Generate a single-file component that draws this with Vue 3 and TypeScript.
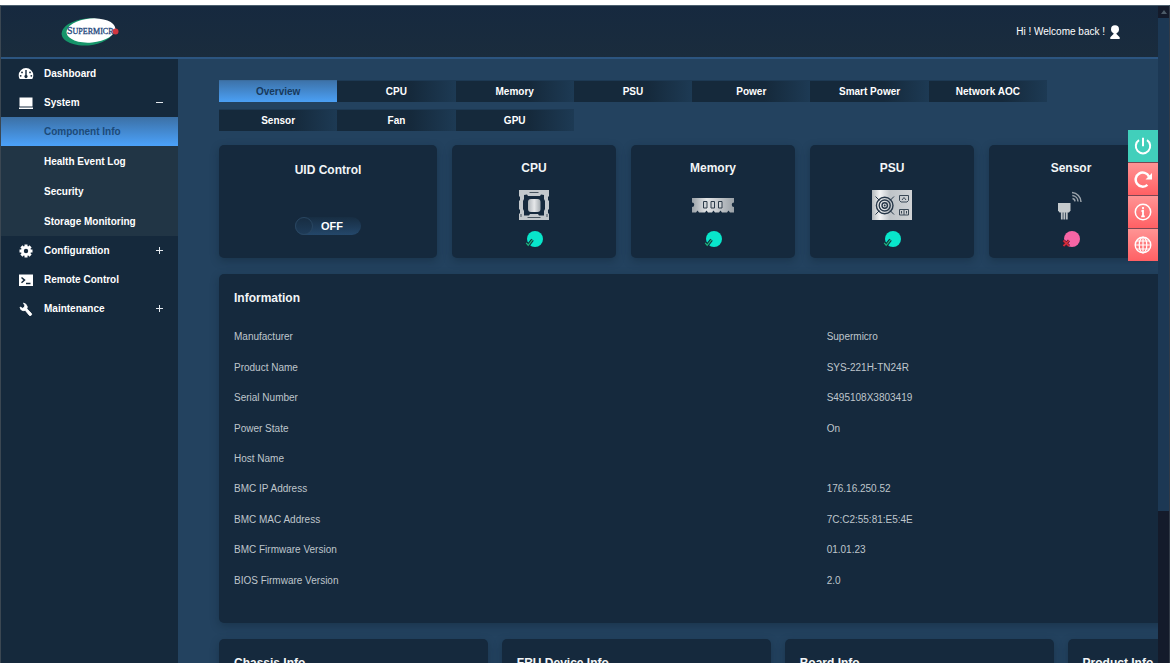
<script setup lang="ts">
import { ref } from 'vue'

interface MenuItem {
  label: string
  icon: string
  mark?: string
  children?: string[]
}

const menu: MenuItem[] = [
  { label: 'Dashboard', icon: 'gauge' },
  {
    label: 'System',
    icon: 'laptop',
    mark: 'minus',
    children: ['Component Info', 'Health Event Log', 'Security', 'Storage Monitoring'],
  },
  { label: 'Configuration', icon: 'gear', mark: 'plus' },
  { label: 'Remote Control', icon: 'terminal' },
  { label: 'Maintenance', icon: 'wrench', mark: 'plus' },
]

const tabs: string[] = [
  'Overview', 'CPU', 'Memory', 'PSU', 'Power', 'Smart Power', 'Network AOC', 'Sensor', 'Fan', 'GPU',
]

const components: { label: string; ok: boolean }[] = [
  { label: 'CPU', ok: true },
  { label: 'Memory', ok: true },
  { label: 'PSU', ok: true },
  { label: 'Sensor', ok: false },
]

const info: [string, string][] = [
  ['Manufacturer', 'Supermicro'],
  ['Product Name', 'SYS-221H-TN24R'],
  ['Serial Number', 'S495108X3803419'],
  ['Power State', 'On'],
  ['Host Name', ''],
  ['BMC IP Address', '176.16.250.52'],
  ['BMC MAC Address', '7C:C2:55:81:E5:4E'],
  ['BMC Firmware Version', '01.01.23'],
  ['BIOS Firmware Version', '2.0'],
]

const details: string[] = ['Chassis Info', 'FRU Device Info', 'Board Info', 'Product Info']
const actions: string[] = ['Power', 'Refresh', 'Information', 'Language']

const activeTab = ref('Overview')
const activePage = ref('Component Info')
const uid = ref(false)
</script>

<template>
  <div class="app">
    <div class="screen">
      <header class="header">
        <a href="#" class="brand">
          <svg width="58" height="30" viewBox="0 0 58 30">
            <ellipse cx="26.500" cy="15" rx="26" ry="13.500" fill="#16956a" transform="rotate(-5 26 15)" />
            <ellipse cx="30" cy="13.500" rx="24.500" ry="12" fill="#fff" transform="rotate(-5 30 14)" />
            <text x="6" y="17" class="logo-text"><tspan class="logo-cap">S</tspan>UPERMICR</text>
            <circle cx="54.500" cy="14.500" r="3" fill="#d2363f" />
          </svg>
        </a>
        <a href="#" class="user">
          <span>Hi ! Welcome back !</span>
          <svg width="10" height="14" viewBox="0 0 10 14" fill="#fff">
            <circle cx="5" cy="4.300" r="4" />
            <path d="M3.500 7.500h3v1.500l3.200 3.200V14H.3v-1.800L3.500 9z" />
          </svg>
        </a>
      </header>

      <div class="body">
        <nav class="sidebar">
          <template v-for="item in menu" :key="item.label">
            <a href="#" class="item">
              <svg v-if="item.icon === 'gauge'" width="16" height="14" viewBox="0 0 16 14">
                <path d="M8 1a7.300 7.300 0 0 1 7.300 7.300c0 1.500-.4 2.900-1.100 3.700H1.800C1.100 11.200.7 9.800.7 8.300A7.300 7.300 0 0 1 8 1z" fill="#fff" />
                <g fill="#15293b">
                  <circle cx="4" cy="5.400" r=".9" /><circle cx="12" cy="5.400" r=".9" />
                  <circle cx="2.700" cy="8.800" r=".9" /><circle cx="13.300" cy="8.800" r=".9" />
                  <path d="M7.300 3h1.400v5a1.600 1.600 0 1 1-1.400 0z" />
                </g>
              </svg>
              <svg v-else-if="item.icon === 'laptop'" width="16" height="14" viewBox="0 0 16 14" fill="#fff">
                <path d="M1.500 1.500h13v9h-13zM1 11.500h14V13H1z" />
              </svg>
              <svg v-else-if="item.icon === 'gear'" width="16" height="14" viewBox="0 0 16 14">
                <g stroke="#fff" stroke-width="3">
                  <path d="M8 .5v13M1.500 7h13M3.400 2.400l9.200 9.200M12.600 2.400l-9.200 9.200" />
                </g>
                <circle cx="8" cy="7" r="5" fill="#fff" />
                <circle cx="8" cy="7" r="2.200" fill="#15293b" />
              </svg>
              <svg v-else-if="item.icon === 'terminal'" width="16" height="14" viewBox="0 0 16 14">
                <path d="M1 1.500h14v11.500H1z" fill="#fff" />
                <path d="M3.500 4.500l3 2.600-3 2.600M8 10.500h4.500" fill="none" stroke="#15293b" stroke-width="1.500" />
              </svg>
              <svg v-else width="16" height="14" viewBox="0 0 16 14">
                <path d="M5.500 1l2.400 1.200 1.400 2.600-.4 2 4.300 4.400a1.300 1.300 0 0 1-2 2L7.300 8.400 5 8.700 2.800 7.500 2 5l2.600 1.300 1.900-1.200.2-1.800z" fill="#fff" stroke="#fff" stroke-width=".8" />
              </svg>
              <span class="item-label">{{ item.label }}</span>
              <svg v-if="item.mark" width="7" height="7" viewBox="0 0 7 7" fill="#e4e9ee">
                <path d="M0 3h7v1H0z" />
                <path v-if="item.mark === 'plus'" d="M3 0h1v7H3z" />
              </svg>
            </a>
            <div v-if="item.children" class="submenu">
              <a
                v-for="child in item.children"
                :key="child"
                href="#"
                class="subitem"
                :class="{ active: child === activePage }"
                @click.prevent="activePage = child"
              >{{ child }}</a>
            </div>
          </template>
        </nav>

        <main class="content">
          <div class="tabs">
            <button
              v-for="tab in tabs"
              :key="tab"
              type="button"
              class="tab"
              :class="{ active: tab === activeTab }"
              @click="activeTab = tab"
            >{{ tab }}</button>
          </div>

          <div class="cards">
            <section class="panel uid">
              <h2>UID Control</h2>
              <label class="switch" :class="{ on: uid }">
                <input v-model="uid" type="checkbox" role="switch" aria-label="UID Control" />
                <span class="knob"></span>
                <span class="state">{{ uid ? 'ON' : 'OFF' }}</span>
              </label>
            </section>
            <section v-for="part in components" :key="part.label" class="panel card">
              <h2>{{ part.label }}</h2>
              <svg v-if="part.label === 'CPU'" width="30" height="30" viewBox="0 0 30 30">
                <defs>
                  <linearGradient id="metal-cpu"><stop offset="0" stop-color="#aeb4b9" /><stop offset=".5" stop-color="#e6e8ea" /><stop offset="1" stop-color="#a4abb0" /></linearGradient>
                </defs>
                <path fill="#c3c8cc" fill-rule="evenodd" d="M0 0h30v6l-1 1v3l1 1v8l-1 1v3l1 1v6H0v-6l1-1v-3l-1-1v-8l1-1V7L0 6zM8 4.500L5 5v4l-1 2v8l1 2v4.500h5l1-1.500h8l1 1.500h5V21l1-2v-8l-1-2V5l-3-.5-1 1.500H9z" />
                <path d="M10.500 2.500h9M8.500 27.500h13M2 24v3M28 24v3" stroke="#46535e" fill="none" />
                <rect x="9" y="9" width="12.500" height="13" rx="3" fill="url(#metal-cpu)" />
              </svg>
              <svg v-else-if="part.label === 'Memory'" width="42" height="30" viewBox="0 0 42 30">
                <defs>
                  <linearGradient id="metal-ram"><stop offset="0" stop-color="#9aa1a7" /><stop offset=".35" stop-color="#e2e4e6" /><stop offset="1" stop-color="#9aa1a7" /></linearGradient>
                </defs>
                <path fill="url(#metal-ram)" d="M0 8h42v4.500a2 2 0 0 0 0 4.500v5.500h-4l-1.500-2-1.500 2h-5l-1.500-2-1.500 2h-4l-1.500-2-1.500 2h-4l-1.500-2-1.500 2H7l-1.500-2-1.500 2H0V17a2 2 0 0 0 0-4.500z" />
                <path d="M11.500 11.500h3.500v6.500h-3.500zM19 11.500h3.500v6.500H19zM26.500 11.500H30v6.500h-3.500z" fill="#cfd3d6" stroke="#2c3b49" />
              </svg>
              <svg v-else-if="part.label === 'PSU'" width="40" height="30" viewBox="0 0 40 30">
                <defs>
                  <linearGradient id="metal-psu"><stop offset="0" stop-color="#b3b9bd" /><stop offset=".2" stop-color="#f3f4f5" /><stop offset=".45" stop-color="#bfc4c8" /><stop offset="1" stop-color="#cfd2d5" /></linearGradient>
                </defs>
                <rect width="40" height="30" fill="url(#metal-psu)" />
                <g fill="none" stroke="#263748" stroke-width="1.400">
                  <path d="M3.500 6.500l4 4M22 6.500l-4 4M3.500 24.500l4-4M22 24.500l-4-4" stroke-width="1" />
                  <circle cx="12.700" cy="15.500" r="8.300" /><circle cx="12.700" cy="15.500" r="5.500" />
                  <circle cx="12.700" cy="15.500" r="2.700" />
                </g>
                <circle cx="12.700" cy="15.500" r="1" fill="#263748" />
                <g fill="none" stroke="#3a4856">
                  <path d="M27.500 5.500h9v5l-1.500 1.500h-6l-1.500-1.500zM27.500 19.500h9V25h-9zM32 19.500V25M29.500 21v2.500M34.500 21v2.500M30 10l2-2.500 2 2.500" />
                </g>
              </svg>
              <svg v-else width="30" height="30" viewBox="0 0 30 30">
                <path d="M2 13h12.500v7.500l-1.500 2H3.500l-1.500-2z" fill="#c5cacd" />
                <path d="M5.800 22v7.500M8.300 22v7.500M10.800 22v7.500" stroke="#bbc1c5" stroke-width="1.800" />
                <g fill="none" stroke="#9aa3ab" stroke-width="1.500">
                  <path d="M16 2.500a9.500 9.500 0 0 1 9 9.500M16.300 5.600a6.200 6.200 0 0 1 5.700 6M16.500 8.600a3 3 0 0 1 2.500 2.800" />
                </g>
              </svg>
              <svg width="18" height="17" viewBox="0 0 18 17" class="status">
                <circle cx="10" cy="8" r="8" :fill="part.ok ? '#08e6cb' : '#f765a5'" />
                <template v-if="part.ok">
                  <path d="M1.200 11.800l2 2.500 4.300-5.500" fill="none" stroke="#102c3c" stroke-width="3.200" />
                  <path d="M1.200 11.800l2 2.500 4.300-5.500" fill="none" stroke="#20b37d" stroke-width="1.300" />
                </template>
                <template v-else>
                  <path d="M1.500 9.500l5.500 5.500M7 9.500l-5.500 5.500" stroke="#5c1730" stroke-width="3" />
                  <path d="M1.500 9.500l5.500 5.500M7 9.500l-5.500 5.500" stroke="#d92f3b" stroke-width="1.700" />
                </template>
              </svg>
            </section>
          </div>

          <section class="panel info">
            <h2>Information</h2>
            <table>
              <tbody>
                <tr v-for="[name, value] in info" :key="name">
                  <th scope="row">{{ name }}</th>
                  <td>{{ value }}</td>
                </tr>
              </tbody>
            </table>
          </section>

          <div class="details">
            <section v-for="title in details" :key="title" class="panel detail">
              <h2>{{ title }}</h2>
            </section>
          </div>
        </main>
      </div>

      <div class="actions">
        <button v-for="action in actions" :key="action" type="button" class="action" :class="{ power: action === 'Power' }" :aria-label="action">
          <svg width="18" height="18" viewBox="0 0 18 18" fill="none" stroke="#fff">
            <g v-if="action === 'Power'" stroke-width="2">
              <path d="M5 3.200a7.200 7.200 0 1 0 8 0M9 .8v8.400" />
            </g>
            <g v-else-if="action === 'Refresh'">
              <path d="M13.400 14.800A7 7 0 1 1 15 6.600" stroke-width="2.500" />
              <path d="M18 3v6.500h-6.500z" fill="#fff" stroke="none" />
            </g>
            <g v-else-if="action === 'Information'">
              <circle cx="9" cy="9" r="7.700" stroke-width="1.500" />
              <path d="M9 4v2.200M7.500 8H9v5M7.200 13.300h3.600" stroke-width="1.800" />
            </g>
            <g v-else stroke-width="1.200">
              <circle cx="9" cy="9" r="7.800" stroke-width="1.400" />
              <ellipse cx="9" cy="9" rx="3.800" ry="7.800" />
              <path d="M9 1v16M1.200 9h15.600M2.500 5h13M2.500 13h13" />
            </g>
          </svg>
        </button>
      </div>
    </div>

    <div class="scrollbar">
      <div class="arrow"></div>
      <div class="thumb"></div>
    </div>
  </div>
</template>

<style>
html,
body {
  margin: 0;
  overflow: hidden;
}
</style>

<style scoped>
.app {
  box-sizing: border-box;
  display: flex;
  height: 100vh;
  overflow: hidden;
  padding-top: 5px;
  background: #fff;
  color: #fff;
  font: 10px/14px "Liberation Sans", Arial, sans-serif;
}

a {
  color: inherit;
  text-decoration: none;
}

h2 {
  margin: 0;
  font-size: 12px;
  line-height: 16px;
  font-weight: bold;
  color: #f2f5f7;
}

.screen {
  position: relative;
  display: flex;
  flex: 1;
  flex-direction: column;
  min-width: 0;
  overflow: hidden;
  border-top: 1px solid #4b5f6e;
  border-left: 1px solid #3b4752;
  background: #23425f;
}

.header {
  display: flex;
  align-items: center;
  justify-content: space-between;
  height: 51px;
  padding: 0 38px 0 60px;
  border-bottom: 2px solid #2c5580;
  background: linear-gradient(#16293f, #1a2c3d);
}

.brand,
.brand svg {
  display: block;
}

.logo-text {
  fill: #24477c;
  stroke: #24477c;
  stroke-width: 0.3;
  font: 8px "Liberation Serif", serif;
}

.logo-cap {
  font-size: 10px;
}

.user {
  display: flex;
  align-items: center;
  gap: 5px;
}

.body {
  display: flex;
  flex: 1;
  min-height: 0;
}

.sidebar {
  flex: none;
  width: 177px;
  background: #15293c;
  font-weight: bold;
}

.item {
  display: flex;
  align-items: center;
  height: 29px;
  padding: 0 15px 0 17px;
}

.item-label {
  flex: 1;
  margin-left: 10px;
}

.submenu {
  display: grid;
  gap: 1px;
  background: #213545;
}

.subitem {
  height: 29px;
  padding-left: 43px;
  line-height: 29px;
}

.subitem.active {
  background: linear-gradient(#3c70a5, #4ba2fb);
  color: #1c4a78;
}

.content {
  flex: 1;
  min-width: 0;
  overflow: hidden;
  padding: 21px 0 0 41px;
  background: #23425f;
}

.tabs {
  display: grid;
  grid-template-columns: repeat(7, 1fr);
  gap: 7px 0;
  max-width: 828px;
  margin-bottom: 14px;
}

.tab {
  height: 22px;
  padding: 0;
  border: 0;
  border-top: 1px solid #1d3953;
  background: linear-gradient(90deg, #15293b 62%, #1d3a54);
  color: #fff;
  font: bold 10px/14px "Liberation Sans", Arial, sans-serif;
}

.tab.active {
  border-top-color: #3b6d9f;
  background: linear-gradient(#3d73aa, #4ba0f5);
  color: #17395c;
}

.panel {
  box-sizing: border-box;
  border-radius: 5px;
  background: #15293d;
  box-shadow: 0 3px 8px rgba(12, 28, 44, 0.35);
}

.cards {
  display: grid;
  grid-template-columns: 218fr repeat(4, 164fr);
  gap: 15px;
  width: calc(100% - 5px);
  margin-bottom: 16px;
}

.uid {
  display: flex;
  flex-direction: column;
  align-items: center;
  gap: 39px;
  padding-top: 17px;
}

.switch {
  position: relative;
  display: flex;
  align-items: center;
  width: 66px;
  height: 18px;
  border-radius: 9px;
  background: linear-gradient(#172d42, #24476a);
  cursor: pointer;
}

.switch input {
  position: absolute;
  inset: 0;
  margin: 0;
  opacity: 0;
}

.knob {
  box-sizing: border-box;
  width: 18px;
  height: 18px;
  border: 1px solid #294661;
  border-radius: 50%;
  background: linear-gradient(#172d42, #1e3b58);
}

.switch.on {
  flex-direction: row-reverse;
}

.state {
  margin: 0 8px;
  font-size: 11px;
  font-weight: bold;
}

.card {
  display: flex;
  flex-direction: column;
  align-items: center;
  padding: 15px 0 10px;
}

.card > svg {
  display: block;
  margin-top: 14px;
}

.card > svg.status {
  margin-top: 11px;
}

.info {
  width: 119%;
  margin-bottom: 16px;
  padding: 16px 15px 27px;
}

.info table {
  width: 100%;
  height: 274px;
  margin-top: 16px;
  border-collapse: collapse;
  table-layout: fixed;
  color: #bfc6cc;
}

.info th,
.info td {
  padding: 0;
  font-weight: normal;
  text-align: left;
}

.info th {
  width: 54.5%;
}

.details {
  display: grid;
  grid-template-columns: repeat(4, 1fr);
  gap: 14px;
  width: 119%;
}

.detail {
  padding: 16px 15px 40px;
}

.actions {
  position: absolute;
  top: 124px;
  right: 0;
  display: grid;
  gap: 1px;
  background: #7b4653;
}

.action {
  display: flex;
  align-items: center;
  justify-content: center;
  width: 30px;
  height: 32px;
  padding: 0;
  border: 0;
  background: linear-gradient(#ff9494, #ff6064);
}

.action.power {
  background: #41cfbb;
}

.scrollbar {
  flex: none;
  width: 11px;
  border-top: 1px solid #4b5f6e;
  border-right: 1px solid #333b47;
  background: #141b2b;
}

.arrow {
  width: 0;
  margin: 4px auto 4px;
  border: 3px solid transparent;
  border-top: 0;
  border-bottom: 4px solid #4d5c69;
}

.thumb {
  height: 75%;
  background: #1c3854;
}
</style>
